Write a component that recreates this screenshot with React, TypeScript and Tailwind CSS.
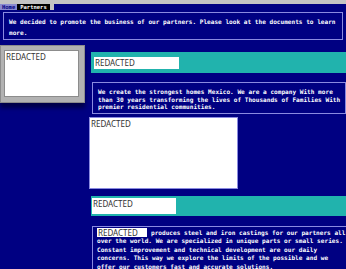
const mono = { fontFamily: '"DejaVu Sans Mono", "Liberation Mono", monospace' };

const TextBox = ({ className, children }: { className?: string; children: React.ReactNode }) => (
	<div
		className={`border border-[#8a8ae0] text-white font-bold text-[6.1px] ${className ?? ""}`}
		style={mono}>
		{children}
	</div>
);

const Redacted = ({ tight }: { tight?: boolean }) => (
	<span
		className={`block font-['Noto_Sans',sans-serif] font-normal text-[8px] text-[#333] ${tight ? "leading-[9px]" : "leading-[10px]"}`}>
		REDACTED
	</span>
);

export default function App() {
	return (
		<div className="w-[346px] h-[269px] overflow-hidden bg-[#000082]">
			<div className="h-[4px] bg-[#c4c4c4]" />
			<div className="flex h-[6px] text-[5.5px] font-bold leading-[6px]" style={mono}>
				<span className="px-[2px] bg-[#8a8ad0] text-[#000082]">Home</span>
				<span className="px-[3px] bg-black text-white">Partners</span>
				<span className="w-[4px] bg-[#c4c4c4]" />
			</div>
			<TextBox className="mx-[3px] mt-[2px] h-[28px] px-[5px] pt-[3px] leading-[11px]">
				We decided to promote the business of our partners. Please look at the documents to learn more.
			</TextBox>
			<div className="flex">
				<div className="w-[85px] shrink-0 pt-[5px]">
					<div className="h-[58px] bg-[#b2b2b2] border border-[#8c8c8c] pl-[3px] pt-[4px] pr-[5px] pb-[5px] shadow-[0_5px_4px_#00004a]">
						<div className="h-full bg-white border border-[#8c8c8c] px-[1px] pt-[1px]">
							<Redacted />
						</div>
					</div>
				</div>
				<div className="w-[262px] shrink-0 ml-[4px] pt-[12px]">
					<div className="ml-[2px] h-[21px] bg-[#21b3ad] pl-[3px] pt-[5px]">
						<div className="w-[85px] h-[12px] bg-white flex items-center pl-[1px]">
							<Redacted />
						</div>
					</div>
					<TextBox className="ml-[3px] mt-[9px] w-[254px] h-[32px] pl-[5px] pt-[5px] leading-[7.5px]">
						We create the strongest homes Mexico. We are a company With more than 30 years transforming the lives of Thousands of Families With premier residential communities.
					</TextBox>
					<div className="mt-[3px] w-[149px] h-[72px] bg-white border border-[#8a8ae0] pl-[1px] pt-[1px]">
						<Redacted />
					</div>
					<div className="ml-[2px] mt-[7px] h-[20px] bg-[#21b3ad] pl-[1px] pt-[2px]">
						<div className="w-[84px] h-[16px] bg-white pl-[1px] pt-[1px]">
							<Redacted />
						</div>
					</div>
					<TextBox className="ml-[3px] mt-[10px] h-[60px] pl-[4px] pr-[1px] pt-[2px] leading-[8.4px]">
						<span className="inline-block align-middle w-[50px] h-[9px] overflow-hidden bg-white mr-[4px] -mt-[1px] pl-[1px]">
							<Redacted tight />
						</span>
						produces steel and iron castings for our partners all over the world. We are specialized in unique parts or small series. Constant improvement and technical development are our daily concerns. This way we explore the limits of the possible and we offer our customers fast and accurate solutions.
					</TextBox>
				</div>
			</div>
		</div>
	);
}
